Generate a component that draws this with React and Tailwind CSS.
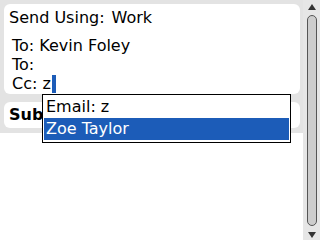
import React from "react";

export default function App() {
  return (
    <div className="w-[320px] h-[240px] flex bg-white overflow-hidden relative font-['DejaVu_Sans',sans-serif] text-black">
      {/* compose fields */}
      <div className="w-[303px] flex flex-col">
        <div className="bg-[#e3e3e3] pt-[4px] pl-[4px] pr-[3px] pb-[5px] flex flex-col gap-[8px]">
          <div className="bg-white rounded-[6px] h-[90px] pl-[5px] pt-[2px] flex flex-col">
            <div className="flex items-center h-[24px] text-[16px] leading-[20px]">
              <span>Send Using:</span>
              <span className="ml-[7px]">Work</span>
            </div>
            <div className="flex flex-col pl-[3px] pt-[6px] text-[16px] leading-[19px]">
              <div>To: Kevin Foley</div>
              <div>To:</div>
              <div className="flex items-center">
                <span>Cc: z</span>
                <span className="w-[4px] h-[18px] bg-[#1c5cb8] ml-[1px]" />
              </div>
            </div>
          </div>
          <div className="bg-white rounded-[6px] h-[26px] pl-[5px] flex items-center text-[16px] font-bold">
            Subject:
          </div>
        </div>
        <div className="flex-1 bg-white" />
      </div>

      {/* scrollbar */}
      <div className="flex-1 bg-[#e6e6e6] flex flex-col items-center pt-[4px] pb-[2px]">
        <svg width="8" height="6" viewBox="0 0 8 6" className="ml-[1px]">
          <path d="M4 0 L8 6 L0 6 Z" fill="#333" />
        </svg>
        <div className="flex-1 w-[10px] mt-[5px] mb-[6px] ml-[1px] rounded-full border border-[#555] bg-[#cdcdcd]" />
        <svg width="8" height="6" viewBox="0 0 8 6" className="ml-[1px]">
          <path d="M0 0 L8 0 L4 6 Z" fill="#333" />
        </svg>
      </div>

      {/* autocomplete popup */}
      <div className="absolute left-[42px] top-[94px] w-[249px] h-[49px] border border-black bg-white p-[1px] flex flex-col text-[16px] leading-[20px]">
        <div className="h-[22px] pl-[2px] flex items-center">Email: z</div>
        <div className="h-[22px] pl-[2px] flex items-center bg-[#1c5cb8] text-white">Zoe Taylor</div>
      </div>
    </div>
  );
}
